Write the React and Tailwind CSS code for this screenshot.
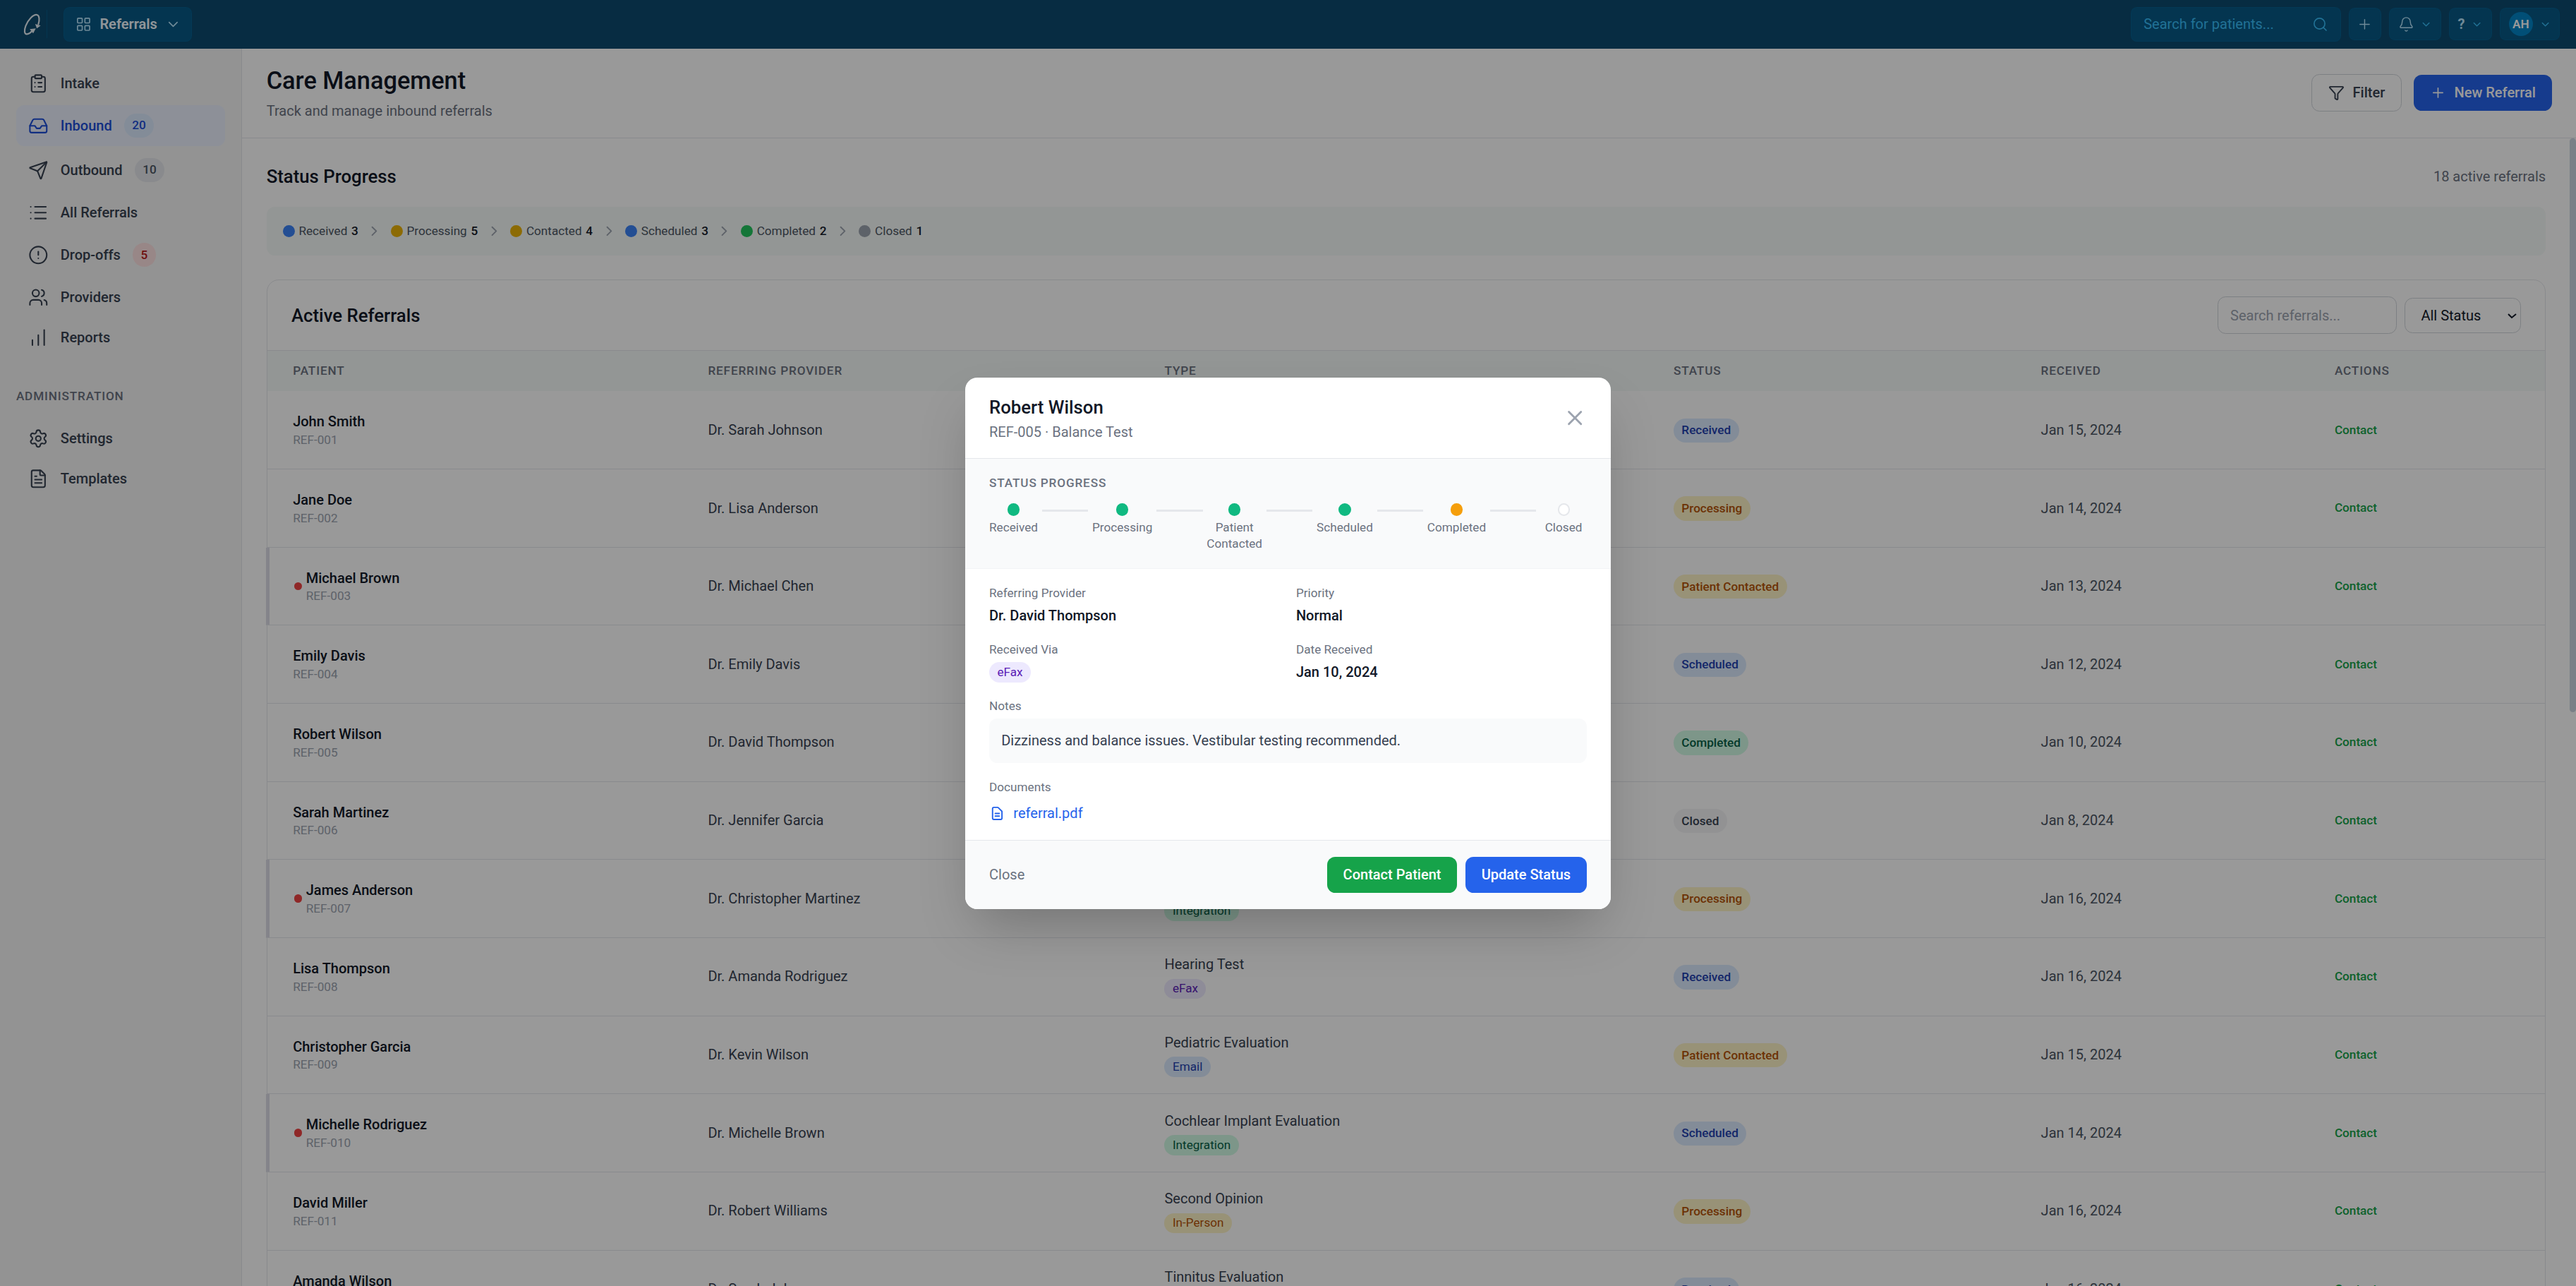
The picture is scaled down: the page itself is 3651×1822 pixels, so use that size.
import React, { useState } from 'react';
import {
  AlertCircle,
  Bell,
  ChartNoAxesColumnIncreasing,
  ChevronDown,
  ChevronRight,
  ClipboardList,
  FileText,
  Funnel,
  Inbox,
  LayoutGrid,
  List,
  Plus,
  Search,
  Send,
  Settings,
  Users,
  X,
} from 'lucide-react';

const NAV_ITEMS = [
  { label: 'Intake', icon: ClipboardList },
  { label: 'Inbound', icon: Inbox, count: 20, badge: 'bg-[#dbeafe] text-[#1d4ed8]', active: true },
  { label: 'Outbound', icon: Send, count: 10, badge: 'bg-[#e5e7eb] text-[#4b5563]' },
  { label: 'All Referrals', icon: List },
  { label: 'Drop-offs', icon: AlertCircle, count: 5, badge: 'bg-[#fee2e2] text-[#b91c1c]' },
  { label: 'Providers', icon: Users },
  { label: 'Reports', icon: ChartNoAxesColumnIncreasing },
];

const ADMIN_ITEMS = [
  { label: 'Settings', icon: Settings },
  { label: 'Templates', icon: FileText },
];

const PIPELINE = [
  { label: 'Received', count: 3, dot: 'bg-[#3b82f6]' },
  { label: 'Processing', count: 5, dot: 'bg-[#eab308]' },
  { label: 'Contacted', count: 4, dot: 'bg-[#eab308]' },
  { label: 'Scheduled', count: 3, dot: 'bg-[#3b82f6]' },
  { label: 'Completed', count: 2, dot: 'bg-[#22c55e]' },
  { label: 'Closed', count: 1, dot: 'bg-[#9ca3af]' },
];

const STATUS_STYLES = {
  Received: 'bg-[#dbeafe] text-[#1e40af]',
  Processing: 'bg-[#fef3c7] text-[#b45309]',
  'Patient Contacted': 'bg-[#fef3c7] text-[#b45309]',
  Scheduled: 'bg-[#dbeafe] text-[#1e40af]',
  Completed: 'bg-[#d1fae5] text-[#065f46]',
  Closed: 'bg-[#f3f4f6] text-[#374151]',
};

const SOURCE_STYLES = {
  eFax: 'bg-[#ede9fe] text-[#5b21b6]',
  Email: 'bg-[#dbeafe] text-[#1e40af]',
  Integration: 'bg-[#d1fae5] text-[#065f46]',
  'In-Person': 'bg-[#fef3c7] text-[#b45309]',
};

const REFERRALS = [
  { id: 'REF-001', name: 'John Smith', provider: 'Dr. Sarah Johnson', type: 'Hearing Test', source: 'eFax', status: 'Received', date: 'Jan 15, 2024' },
  { id: 'REF-002', name: 'Jane Doe', provider: 'Dr. Lisa Anderson', type: 'Hearing Aid Fitting', source: 'Email', status: 'Processing', date: 'Jan 14, 2024' },
  { id: 'REF-003', name: 'Michael Brown', provider: 'Dr. Michael Chen', type: 'Tinnitus Evaluation', source: 'Integration', status: 'Patient Contacted', date: 'Jan 13, 2024', urgent: true },
  { id: 'REF-004', name: 'Emily Davis', provider: 'Dr. Emily Davis', type: 'Pediatric Evaluation', source: 'In-Person', status: 'Scheduled', date: 'Jan 12, 2024' },
  { id: 'REF-005', name: 'Robert Wilson', provider: 'Dr. David Thompson', type: 'Balance Test', source: 'eFax', status: 'Completed', date: 'Jan 10, 2024' },
  { id: 'REF-006', name: 'Sarah Martinez', provider: 'Dr. Jennifer Garcia', type: 'Hearing Test', source: 'Email', status: 'Closed', date: 'Jan 8, 2024' },
  { id: 'REF-007', name: 'James Anderson', provider: 'Dr. Christopher Martinez', type: 'Cochlear Implant', source: 'Integration', status: 'Processing', date: 'Jan 16, 2024', urgent: true },
  { id: 'REF-008', name: 'Lisa Thompson', provider: 'Dr. Amanda Rodriguez', type: 'Hearing Test', source: 'eFax', status: 'Received', date: 'Jan 16, 2024' },
  { id: 'REF-009', name: 'Christopher Garcia', provider: 'Dr. Kevin Wilson', type: 'Pediatric Evaluation', source: 'Email', status: 'Patient Contacted', date: 'Jan 15, 2024' },
  { id: 'REF-010', name: 'Michelle Rodriguez', provider: 'Dr. Michelle Brown', type: 'Cochlear Implant Evaluation', source: 'Integration', status: 'Scheduled', date: 'Jan 14, 2024', urgent: true },
  { id: 'REF-011', name: 'David Miller', provider: 'Dr. Robert Williams', type: 'Second Opinion', source: 'In-Person', status: 'Processing', date: 'Jan 16, 2024' },
  { id: 'REF-012', name: 'Amanda Wilson', provider: 'Dr. Sarah Johnson', type: 'Tinnitus Evaluation', source: 'eFax', status: 'Received', date: 'Jan 16, 2024' },
];

const STEPS = [
  { label: 'Received', dot: 'bg-[#10b981]' },
  { label: 'Processing', dot: 'bg-[#10b981]' },
  { label: 'Patient Contacted', dot: 'bg-[#10b981]', width: 'w-[55px]' },
  { label: 'Scheduled', dot: 'bg-[#10b981]' },
  { label: 'Completed', dot: 'bg-[#f59e0b]' },
  { label: 'Closed', dot: 'bg-white border-2 border-[#e5e7eb]', width: 'w-[46px]' },
];

const COLUMNS = 'grid grid-cols-[412.4px_452.3px_504.6px_363.7px_291px_1fr]';

function Logo() {
  return (
    <svg viewBox="0 0 30 30" className="w-[30px] h-[30px]" fill="none" stroke="#e5eef5" strokeWidth="1.5">
      <path d="M21.8 15.5C23.4 10.6 23 6.2 20.6 5.6C17 4.8 11.6 10.6 9.4 16.6C7.6 21.4 8.1 24.6 10.4 24.7C12.2 24.8 14.4 23.2 16.4 20.8" />
      <path d="M18.8 14.6L24.2 16.2L20.4 19Z" fill="#e5eef5" stroke="none" />
      <path d="M13.4 19.8L19.4 19L16.8 24Z" fill="#e5eef5" stroke="none" />
    </svg>
  );
}

function DocumentIcon({ className }) {
  return (
    <svg viewBox="0 0 24 24" className={className} fill="none" stroke="currentColor" strokeWidth="2" strokeLinecap="round" strokeLinejoin="round">
      <path d="M9 12h6m-6 4h6m2 5H7a2 2 0 01-2-2V5a2 2 0 012-2h5.586a1 1 0 01.707.293l5.414 5.414a1 1 0 01.293.707V19a2 2 0 01-2 2z" />
    </svg>
  );
}

function TopBar() {
  const box = 'flex items-center h-8 rounded-md border border-[#0369a1]/40 bg-[#075985] text-[#bae6fd]';

  return (
    <header className="flex items-center justify-between h-12 shrink-0 bg-[#0c4a6e] pr-4">
      <div className="flex items-center">
        <div className="flex items-center h-7 pl-4 border-r border-[#075985]">
          <Logo />
        </div>
        <button className="ml-4 flex items-center gap-2 h-[34px] pl-[11.5px] pr-[10px] rounded-md border border-[#0369a1]/40 bg-[#075985] text-sm font-semibold text-[#f0f9ff]">
          <LayoutGrid className="w-4 h-4 text-[#bae6fd]" strokeWidth={1.75} />
          Referrals
          <ChevronDown className="w-4 h-4 text-[#bae6fd]" strokeWidth={1.75} />
        </button>
      </div>

      <div className="flex items-center gap-2">
        <div className="flex items-center justify-between w-[208px] h-[34px] pl-3 pr-[11px] rounded-md border border-[#0369a1]/40 bg-[#075985] text-sm text-[#38bdf8]">
          <span>Search for patients...</span>
          <Search className="w-4 h-4 mr-px" strokeWidth={1.75} />
        </div>
        <button className={`${box} w-8 justify-center`}>
          <Plus className="w-4 h-4" strokeWidth={1.5} />
        </button>
        <button className={`${box} gap-1.5 px-2`}>
          <Bell className="w-4 h-4" strokeWidth={1.5} />
          <ChevronDown className="w-3 h-3 text-[#38bdf8]" />
        </button>
        <button className={`${box} gap-1.5 px-2 text-sm font-bold`}>
          ?
          <ChevronDown className="w-3 h-3 text-[#38bdf8]" />
        </button>
        <button className={`${box} gap-1.5 px-2`}>
          <span className="flex items-center justify-center w-6 h-6 rounded-full bg-[#0284c7] text-xs font-semibold text-white">
            AH
          </span>
          <ChevronDown className="w-3 h-3 text-[#38bdf8]" />
        </button>
      </div>
    </header>
  );
}

function NavItem({ item }) {
  const Icon = item.icon;
  return (
    <a
      className={`flex items-center gap-3 px-3 py-2 rounded-lg text-sm font-medium ${
        item.active ? 'bg-[#ebf1fe] text-[#1d4ed8]' : 'text-[#374151]'
      }`}
    >
      <Icon className="w-5 h-5" strokeWidth={1.75} />
      {item.label}
      {item.count && (
        <span className={`px-2 py-1 rounded-full text-xs font-medium ${item.badge}`}>{item.count}</span>
      )}
    </a>
  );
}

function Sidebar() {
  return (
    <aside className="w-60 shrink-0 border-r border-[#e5e7eb] bg-[#f5f5f5] px-4 pt-[16.4px]">
      <nav className="flex flex-col gap-1">
        {NAV_ITEMS.map((item) => (
          <NavItem key={item.label} item={item} />
        ))}
      </nav>
      <h3 className="mt-8 mb-4 text-xs font-medium uppercase tracking-wider text-[#6b7280]">Administration</h3>
      <nav className="flex flex-col gap-1">
        {ADMIN_ITEMS.map((item) => (
          <NavItem key={item.label} item={item} />
        ))}
      </nav>
    </aside>
  );
}

function PageHeader() {
  return (
    <div className="flex items-center justify-between px-6 pt-4 pb-[16.3px] border-b border-[#e5e7eb]">
      <div>
        <h1 className="text-2xl font-medium text-[#111827]">Care Management</h1>
        <p className="mt-1 text-sm text-[#6b7280]">Track and manage inbound referrals</p>
      </div>
      <div className="flex items-center gap-3">
        <button className="flex items-center gap-2 px-4 py-2 rounded-lg border border-[#d1d5db] text-sm font-medium text-[#374151]">
          <Funnel className="w-4 h-4" />
          Filter
        </button>
        <button className="flex items-center gap-2 px-4 py-2 rounded-lg bg-[#2563eb] text-sm font-medium text-white">
          <Plus className="w-4 h-4" strokeWidth={1.75} />
          New Referral
        </button>
      </div>
    </div>
  );
}

function StatusProgress() {
  return (
    <section>
      <div className="flex items-center justify-between">
        <h2 className="text-lg font-medium text-[#111827]">Status Progress</h2>
        <span className="text-sm text-[#6b7280]">18 active referrals</span>
      </div>
      <div className="mt-4 flex items-center gap-2 p-4 rounded-lg bg-[#f6faf8] text-xs text-[#4b5563]">
        {PIPELINE.map((stage, i) => (
          <React.Fragment key={stage.label}>
            {i > 0 && <ChevronRight className="w-4 h-4 text-[#9ca3af]" />}
            <div className="flex items-center gap-1">
              <span className={`w-3 h-3 rounded-full ${stage.dot}`} />
              <span>{stage.label}</span>
              <span className="font-medium text-[#111827]">{stage.count}</span>
            </div>
          </React.Fragment>
        ))}
      </div>
    </section>
  );
}

function ReferralRow({ referral }) {
  return (
    <div
      className={`${COLUMNS} relative items-center h-[77.35px] border-b border-[#e5e7eb] text-sm ${
        referral.urgent ? '-ml-px pl-px before:absolute before:inset-y-0 before:left-0 before:w-[3px] before:bg-[#dcdde6]' : ''
      }`}
    >
      <div className="flex items-center gap-1 pl-[25.5px]">
        {referral.urgent && <span className="ml-px w-2 h-2 rounded-full bg-[#ef4444]" />}
        <div>
          <div className="font-medium text-[#111827]">{referral.name}</div>
          <div className="text-xs text-[#9ca3af]">{referral.id}</div>
        </div>
      </div>
      <div className="pl-[24.3px] text-[#374151]">{referral.provider}</div>
      <div className="pl-[24.3px] text-[#374151]">
        <div>{referral.type}</div>
        <div className="mt-1 flex">
          <span className={`px-2 py-0.5 rounded-full text-xs ${SOURCE_STYLES[referral.source]}`}>{referral.source}</span>
        </div>
      </div>
      <div className="flex pl-6 pt-px">
        <span className={`px-2 py-1 rounded-full text-xs font-medium ${STATUS_STYLES[referral.status]}`}>
          {referral.status}
        </span>
      </div>
      <div className="pl-[24.3px] text-[#4b5563]">{referral.date}</div>
      <div className="pl-[24.3px] text-xs font-medium text-[#16a34a]">Contact</div>
    </div>
  );
}

function ReferralTable() {
  return (
    <section className="mt-6 rounded-xl border border-[#e5e7eb]">
      <div className="flex items-center justify-between px-6 pt-[16.3px] pb-4 border-b border-[#e5e7eb]">
        <h2 className="text-lg font-medium text-[#111827]">Active Referrals</h2>
        <div className="flex items-center gap-2">
          <input
            className="w-[177.5px] h-[36.5px] px-3 rounded-lg border border-[#d1d5db] text-sm placeholder:text-[#9ca3af]"
            placeholder="Search referrals..."
          />
          <select className="w-[115px] h-[35px] px-3 rounded-lg border border-[#d1d5db] text-sm text-[#111827]">
            <option>All Status</option>
          </select>
        </div>
      </div>
      <div className={`${COLUMNS} h-[40.4px] items-center bg-[#f6faf8] text-xs font-medium uppercase tracking-wider text-[#6b7280]`}>
        <div className="pl-[25.5px]">Patient</div>
        <div className="pl-[24.3px]">Referring Provider</div>
        <div className="pl-[24.3px]">Type</div>
        <div className="pl-6">Status</div>
        <div className="pl-[24.3px]">Received</div>
        <div className="pl-[24.3px]">Actions</div>
      </div>
      {REFERRALS.map((referral) => (
        <ReferralRow key={referral.id} referral={referral} />
      ))}
    </section>
  );
}

function Field({ label, children }) {
  return (
    <div>
      <div className="text-xs text-[#6b7280]">{label}</div>
      <div className="mt-1 text-sm font-medium text-[#111827]">{children}</div>
    </div>
  );
}

function ReferralModal({ isOpen, onClose }) {
  if (!isOpen) return null;

  return (
    <div className="absolute inset-0 z-50 flex items-center justify-center bg-black/40 pt-[0.6px]">
      <div className="w-[640px] overflow-hidden rounded-xl bg-white shadow-2xl">
        <div className="flex items-center justify-between px-6 pt-4 pb-[16.3px] border-b border-[#e5e7eb]">
          <div>
            <h3 className="text-lg font-medium text-[#111827]">Robert Wilson</h3>
            <p className="text-sm text-[#6b7280]">REF-005 · Balance Test</p>
          </div>
          <button onClick={onClose} className="text-[#9ca3af]">
            <X className="w-6 h-6" />
          </button>
        </div>

        <div className="px-6 pt-4 pb-[16.3px] border-b border-[#f3f4f6] bg-[#f9fafb]">
          <div className="text-xs font-medium uppercase tracking-wider text-[#6b7280]">Status Progress</div>
          <div className="mt-3 flex items-start">
            {STEPS.map((step, i) => (
              <React.Fragment key={step.label}>
                {i > 0 && <div className="mx-1 mt-1.5 h-0.5 flex-1 bg-[#e5e7eb]" />}
                <div className={`flex flex-col items-center ${step.width || ''}`}>
                  <span className={`w-3 h-3 rounded-full ${step.dot}`} />
                  <span className="mt-1 text-center text-xs text-[#6b7280]">{step.label}</span>
                </div>
              </React.Fragment>
            ))}
          </div>
        </div>

        <div className="flex flex-col gap-4 px-6 py-4">
          <div className="grid grid-cols-2 gap-4">
            <Field label="Referring Provider">Dr. David Thompson</Field>
            <Field label="Priority">Normal</Field>
            <Field label="Received Via">
              <span className={`flex w-fit px-2 py-0.5 rounded-full text-xs font-normal ${SOURCE_STYLES.eFax}`}>eFax</span>
            </Field>
            <Field label="Date Received">Jan 10, 2024</Field>
          </div>
          <div>
            <div className="text-xs text-[#6b7280]">Notes</div>
            <p className="mt-1 p-3 rounded-lg bg-[#f9fafb] text-sm text-[#374151]">
              Dizziness and balance issues. Vestibular testing recommended.
            </p>
          </div>
          <div>
            <div className="text-xs text-[#6b7280]">Documents</div>
            <a className="mt-2 flex items-center gap-2 text-sm text-[#2563eb]">
              <DocumentIcon className="w-4 h-4" />
              referral.pdf
            </a>
          </div>
        </div>

        <div className="flex items-center justify-between px-6 pt-[16.3px] pb-4 border-t border-[#e5e7eb] bg-[#f9fafb]">
          <button onClick={onClose} className="text-sm text-[#6b7280]">
            Close
          </button>
          <div className="flex gap-2">
            <button className="px-4 py-2 rounded-lg bg-[#16a34a] text-sm font-medium text-white">Contact Patient</button>
            <button className="px-4 py-2 rounded-lg bg-[#2563eb] text-sm font-medium text-white">Update Status</button>
          </div>
        </div>
      </div>
    </div>
  );
}

export default function App() {
  const [modalOpen, setModalOpen] = useState(true);

  return (
    <div className="h-screen w-screen overflow-hidden">
      <div className="relative flex flex-col w-full h-full overflow-hidden bg-white font-['Roboto',sans-serif] [zoom:1.4306]">
        <TopBar />
        <div className="flex flex-1 min-h-0">
          <Sidebar />
          <main className="flex flex-col flex-1 min-w-0">
            <PageHeader />
            <div className="flex flex-1 min-h-0">
              <div className="flex-1 min-w-0 overflow-hidden p-6">
                <StatusProgress />
                <ReferralTable />
              </div>
              {/* scrollbar */}
              <div className="w-1.5 shrink-0">
                <div className="h-[568px] rounded-full bg-[#cbd5e1]" />
              </div>
            </div>
          </main>
        </div>
        <ReferralModal isOpen={modalOpen} onClose={() => setModalOpen(false)} />
      </div>
    </div>
  );
}
